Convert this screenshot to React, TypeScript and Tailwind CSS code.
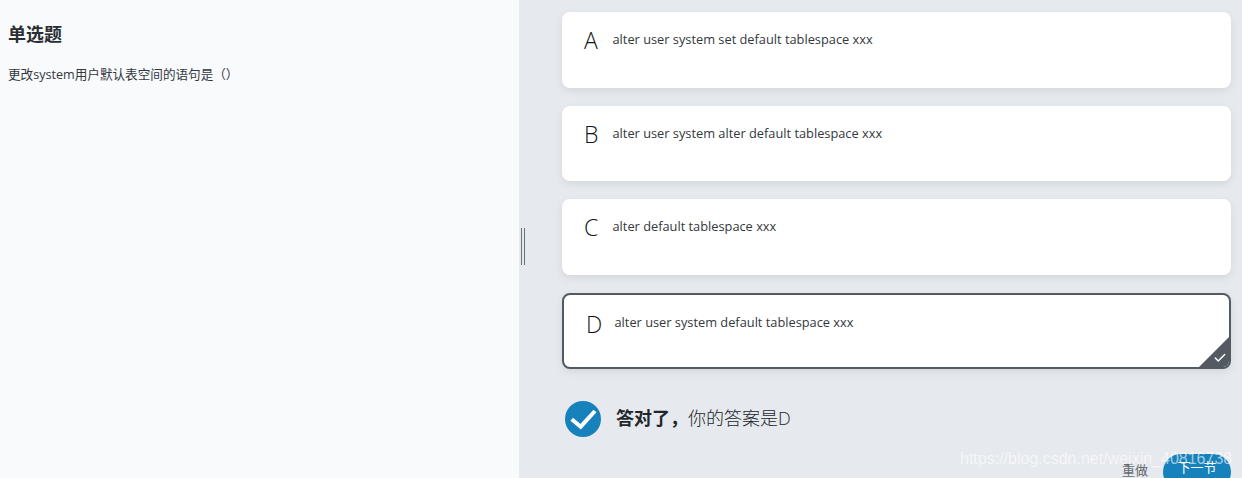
import { Check } from "lucide-react";

const font = "font-['Open_Sans','Noto_Sans_CJK_SC',sans-serif]";

const options = [
    { key: "A", text: "alter user system set default tablespace xxx", h: "h-[76px]" },
    { key: "B", text: "alter user system alter default tablespace xxx", h: "h-[75px]" },
    { key: "C", text: "alter default tablespace xxx", h: "h-[76px]" },
    { key: "D", text: "alter user system default tablespace xxx", h: "h-[76px]", selected: true },
];

function OptionCard({ k, text, h, selected }: { k: string; text: string; h: string; selected?: boolean }) {
    if (selected) {
        return (
            <div className={`relative flex ${h} overflow-hidden rounded-lg border-2 border-[#535a62] bg-white pl-[22px] pt-[14px] shadow-[0_3px_8px_rgba(0,0,0,0.08)]`}>
                <span className="w-[28.5px] text-[23px] font-light leading-[30px] text-[#111418]">{k}</span>
                <span className="pt-[3px] text-[12.8px] leading-[20px] text-[#33383d]">{text}</span>
                {/* corner tick */}
                <div className="absolute bottom-0 right-0 h-[30px] w-[30px] bg-[#535a62] [clip-path:polygon(100%_0,100%_100%,0_100%)]">
                    <Check className="absolute bottom-[2px] right-[2px] h-[14px] w-[14px] text-white" strokeWidth={2.5} />
                </div>
            </div>
        );
    }
    return (
        <div className={`flex ${h} rounded-lg bg-white pl-[22px] pt-[13px] shadow-[0_3px_8px_rgba(0,0,0,0.08)]`}>
            <span className="w-[28.5px] text-[23px] font-light leading-[30px] text-[#111418]">{k}</span>
            <span className="pt-[4px] text-[12.8px] leading-[20px] text-[#33383d]">{text}</span>
        </div>
    );
}

export default function App() {
    return (
        <div className={`relative flex h-[478px] w-[1242px] overflow-hidden bg-[#e6e9ed] ${font}`}>
            {/* LEFT: question */}
            <div className="h-full w-[519px] shrink-0 bg-[#f9fafc] pl-2 pt-[21px]">
                <h2 className="text-[18px] font-bold leading-[26px] text-[#2a2e33]">单选题</h2>
                <p className="mt-[18px] text-[12.6px] leading-[20px] text-[#33383d]">更改system用户默认表空间的语句是（）</p>
            </div>

            {/* splitter handle */}
            <div className="absolute left-[521px] top-[228px] h-[37px] w-[4px] border-x border-[#6b7177]" />

            {/* RIGHT: options */}
            <div className="flex-1 pl-[43px] pr-[11px] pt-3">
                <div className="flex flex-col gap-[18px]">
                    {options.map((o) => (
                        <OptionCard key={o.key} k={o.key} text={o.text} h={o.h} selected={o.selected} />
                    ))}
                </div>

                <div className="ml-[3px] mt-[32px] flex items-center">
                    <div className="h-[36px] w-[36px] rounded-full bg-[#1681bb]">
                        <svg viewBox="0 0 36 36" className="h-[36px] w-[36px]" fill="none" stroke="white" strokeWidth="4">
                            <path d="M6.7 18.3L15.7 25.7L30 10" />
                        </svg>
                    </div>
                    <div className="ml-[15px] -translate-y-px text-[18px] leading-[26px] text-[#22262a]">
                        <span className="font-bold">答对了，</span>
                        <span className="font-light">你的答案是D</span>
                    </div>
                </div>

                <div className="mt-[17px] flex items-center justify-end">
                    <span className="mr-[15px] -translate-y-[2px] text-[13px] leading-[20px] text-[#666a6f]">重做</span>
                    <button type="button" className="h-[36px] w-[68px] rounded-full bg-[#1681bb] pb-[10px] text-[13px] leading-[20px] text-white">
                        下一节
                    </button>
                </div>
            </div>

            {/* watermark */}
            <div className="absolute left-[960px] top-[449px] font-['Liberation_Sans',sans-serif] text-[16px] leading-[20px] text-white/60">
                https://blog.csdn.net/weixin_40816738
            </div>
        </div>
    );
}
